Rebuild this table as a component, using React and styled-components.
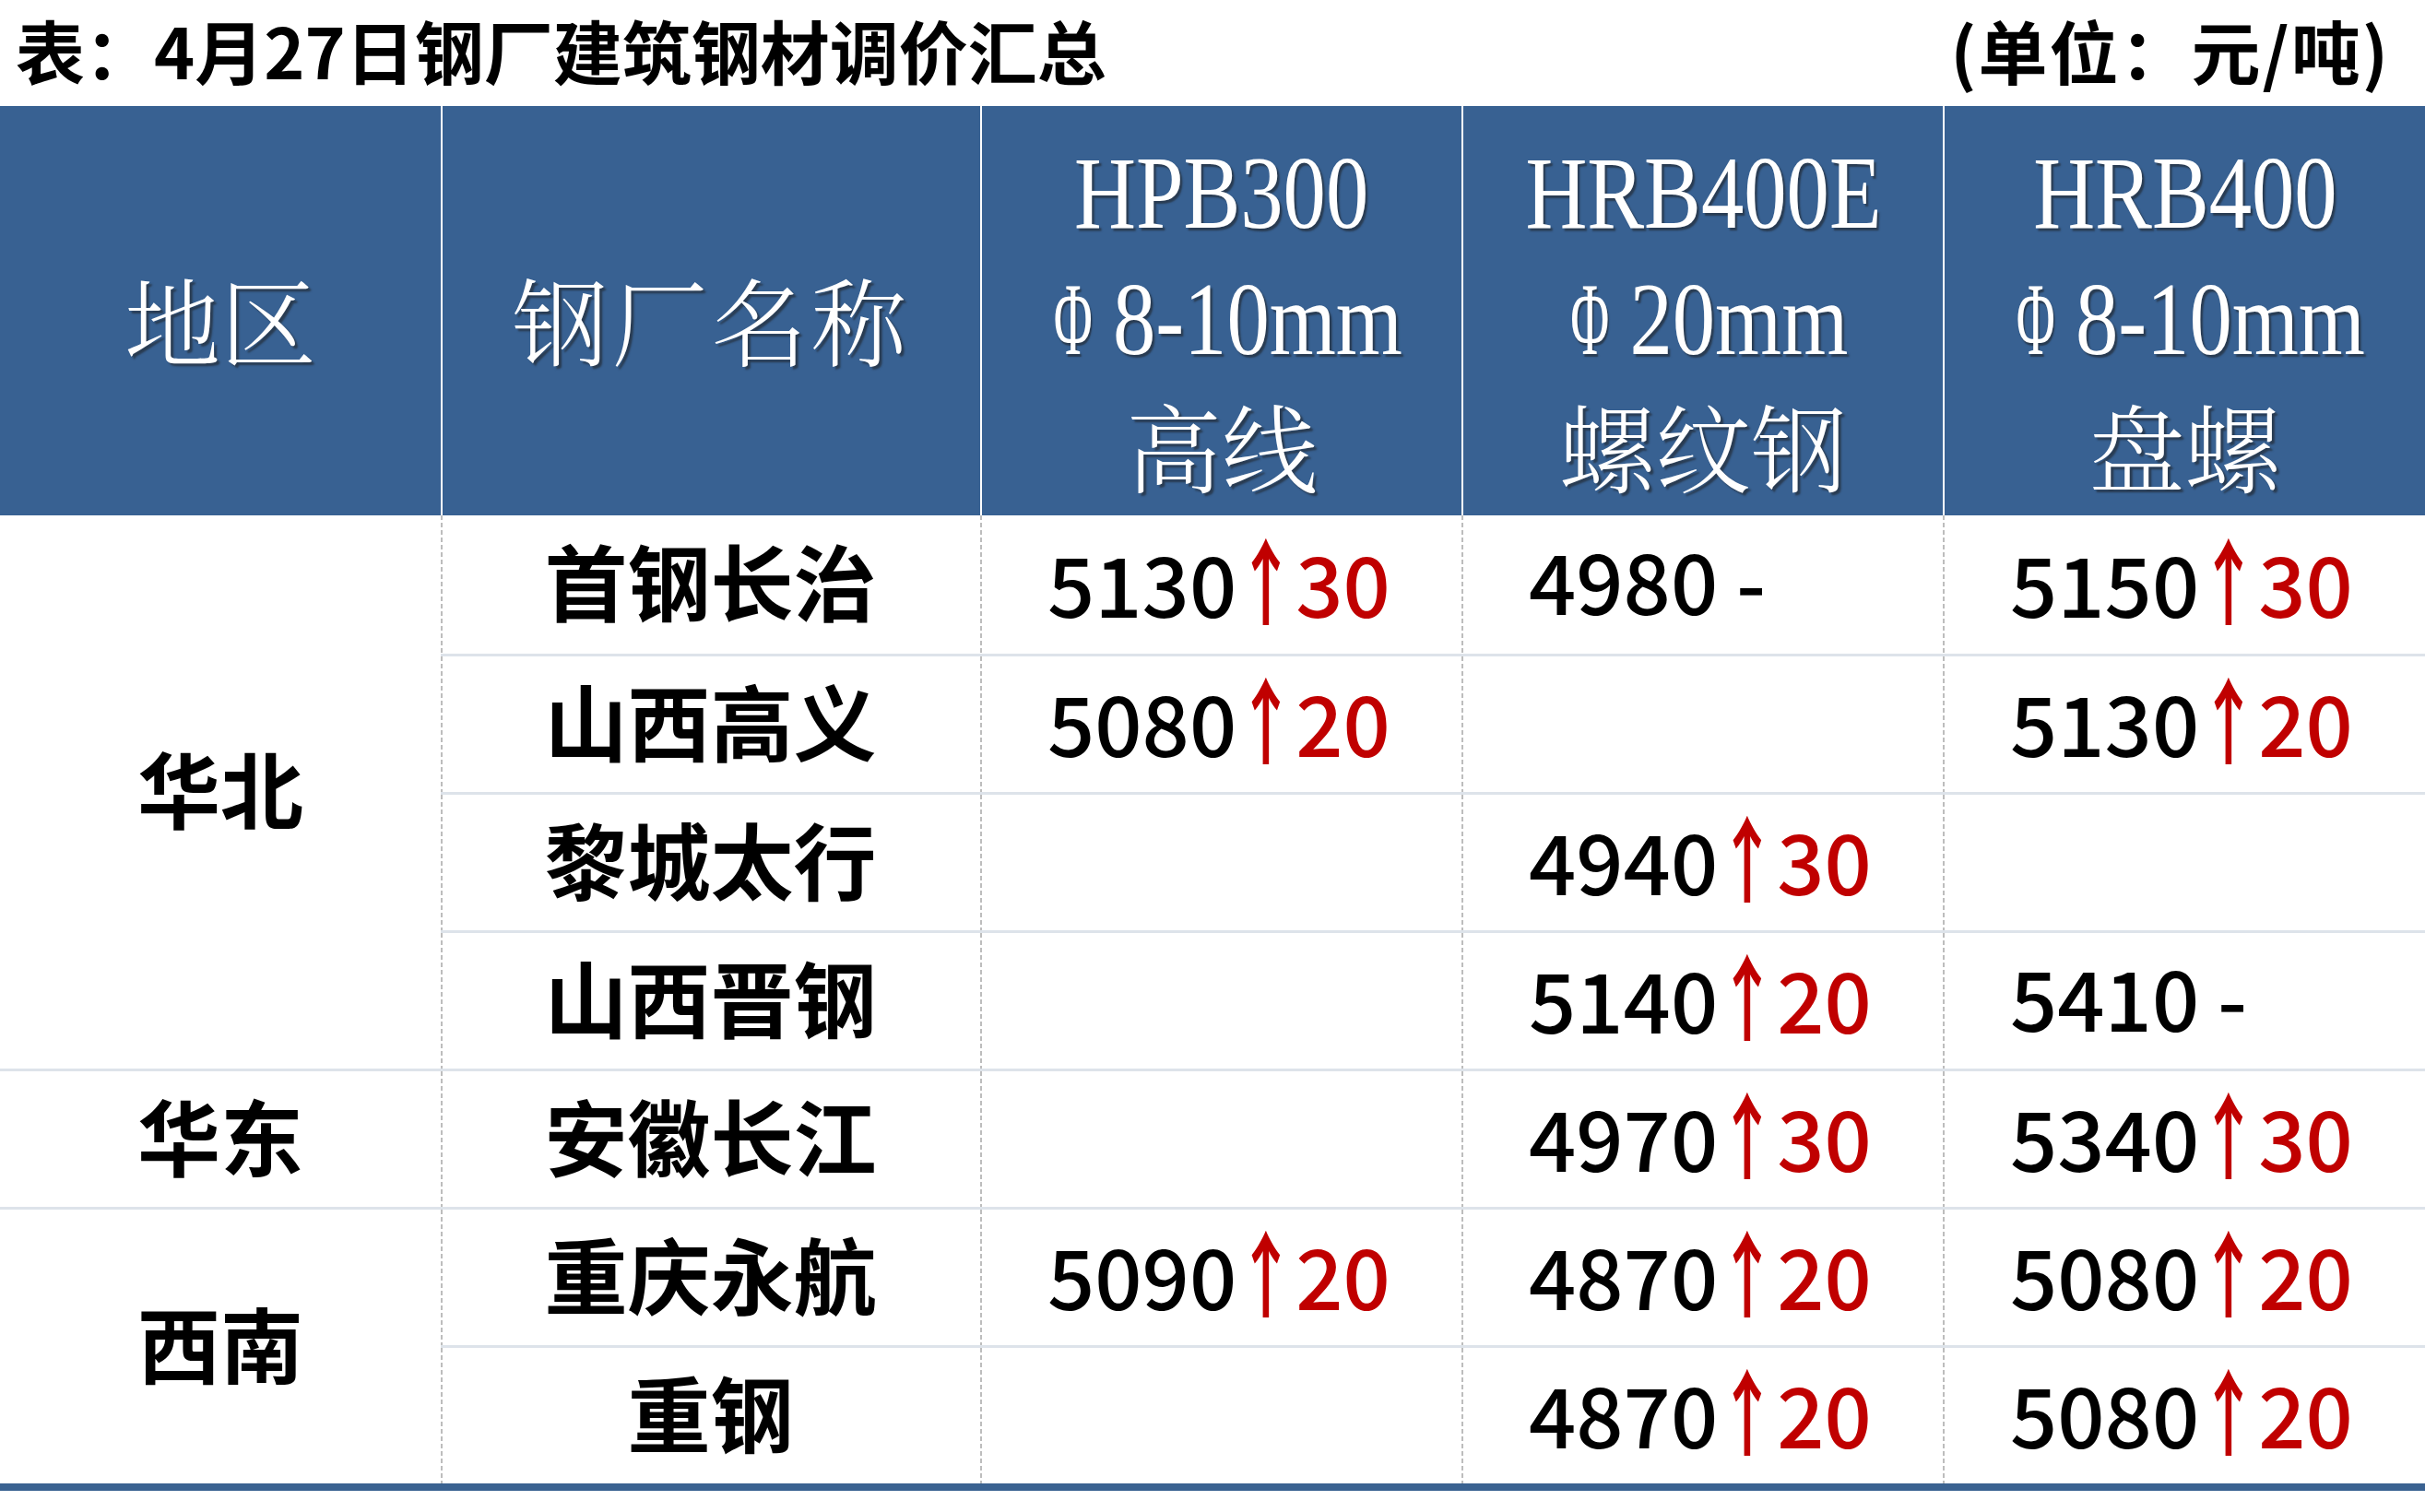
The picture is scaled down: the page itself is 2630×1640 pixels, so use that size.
import React from "react";
import styled, { createGlobalStyle } from "styled-components";

const GlobalStyle = createGlobalStyle`
  html, body { margin: 0; padding: 0; background: #ffffff; }
  body {
    width: 2630px;
    height: 1640px;
    overflow: hidden;
    font-family: "Noto Sans CJK SC", "Noto Sans", sans-serif;
  }
`;

const BLUE = "#386192";
const LINE = "#dde3ea";
const RED = "#c00000";

const Page = styled.div`
  width: 2630px;
  height: 1640px;
  display: flex;
  flex-direction: column;
  background: #fff;
`;

const TitleBar = styled.div`
  height: 115px;
  box-sizing: border-box;
  padding: 0 38px 8px 17px;
  display: flex;
  align-items: center;
  justify-content: space-between;
  font-family: "Noto Sans CJK SC", sans-serif;
  font-weight: 700;
  font-size: 75px;
  line-height: 1;
  color: #000;
  white-space: nowrap;
`;

const Unit = styled.span`
  letter-spacing: 2px;
`;

const Table = styled.div`
  display: grid;
  grid-template-columns: 478px 585px 522px 522px 523px;
  grid-template-rows: 444px repeat(7, 150px);
  border-bottom: 8px solid #3a6291;
`;

const HeadCell = styled.div`
  background: ${BLUE};
  color: #fff;
  display: flex;
  flex-direction: column;
  align-items: center;
  justify-content: center;
  box-sizing: border-box;
  padding-top: 16px;
  border-left: ${(p) => (p.$first ? "none" : "2px solid #ffffff")};
  text-shadow: 3px 3px 2px rgba(30, 30, 30, 0.55);
  white-space: nowrap;
`;

const HeadLine = styled.div`
  font-family: ${(p) =>
    p.$latin
      ? '"Liberation Serif", "Times New Roman", serif'
      : '"Noto Serif CJK SC", "Noto Sans CJK SC", serif'};
  font-size: ${(p) => (p.$latin ? 113 : 104)}px;
  font-weight: ${(p) => (p.$latin ? 400 : 300)};
  line-height: ${(p) => (p.$single ? "1" : "137px")};
  letter-spacing: ${(p) => (p.$spaced ? "4px" : "0")};
`;

const Condensed = styled.span`
  display: inline-block;
  transform: scaleX(0.82);
`;

const Phi = styled.span`
  display: inline-block;
  transform: scaleX(0.62);
  margin-right: 0.1em;
`;

const BodyCell = styled.div`
  display: flex;
  align-items: center;
  box-sizing: border-box;
  padding-bottom: 12px;
  border-top: ${(p) => (p.$top ? `3px solid ${LINE}` : "none")};
  color: #000;
  font-size: 90px;
  line-height: 1;
  white-space: nowrap;
`;

const RegionCell = styled(BodyCell)`
  grid-row: span ${(p) => p.$span};
  justify-content: center;
  font-weight: 700;
`;

const DashedCell = styled(BodyCell)`
  background-image: linear-gradient(to bottom, #bdbdbd 62%, transparent 62%);
  background-size: 2px 8px;
  background-repeat: repeat-y;
  background-position: left top;
`;

const NameCell = styled(DashedCell)`
  justify-content: center;
  font-weight: 700;
`;

const PriceCell = styled(DashedCell)`
  justify-content: flex-start;
  padding-left: 73px;
  font-weight: 500;
`;

const Arrow = styled.span`
  display: inline-block;
  font-family: "Noto Sans CJK SC", sans-serif;
  font-weight: 700;
  font-size: 102px;
  line-height: 90px;
  height: 90px;
  color: ${RED};
  transform: scaleX(0.63);
  margin: 0 -19px;
`;

const Change = styled.span`
  color: ${RED};
`;

const Flat = styled.span`
  margin-left: 0.22em;
`;

const headers = [
  { top: "HPB300", size: "8-10mm", kind: "高线" },
  { top: "HRB400E", size: "20mm", kind: "螺纹钢" },
  { top: "HRB400", size: "8-10mm", kind: "盘螺" },
];

const rows = [
  { region: "华北", span: 4, name: "首钢长治", p: [["5130", "30"], ["4980", null], ["5150", "30"]] },
  { name: "山西高义", p: [["5080", "20"], null, ["5130", "20"]] },
  { name: "黎城太行", p: [null, ["4940", "30"], null] },
  { name: "山西晋钢", p: [null, ["5140", "20"], ["5410", null]] },
  { region: "华东", span: 1, name: "安徽长江", p: [null, ["4970", "30"], ["5340", "30"]] },
  { region: "西南", span: 2, name: "重庆永航", p: [["5090", "20"], ["4870", "20"], ["5080", "20"]] },
  { name: "重钢", p: [null, ["4870", "20"], ["5080", "20"]] },
];

function Price({ value }) {
  if (!value) return null;
  const [price, change] = value;
  return (
    <span>
      {price}
      {change ? (
        <>
          <Arrow>↑</Arrow>
          <Change>{change}</Change>
        </>
      ) : (
        <Flat>-</Flat>
      )}
    </span>
  );
}

export default function App() {
  return (
    <Page>
      <GlobalStyle />
      <TitleBar>
        <span>表：4月27日钢厂建筑钢材调价汇总</span>
        <Unit>(单位：元/吨)</Unit>
      </TitleBar>
      <Table>
        <HeadCell $first>
          <HeadLine $single>地区</HeadLine>
        </HeadCell>
        <HeadCell>
          <HeadLine $single $spaced>钢厂名称</HeadLine>
        </HeadCell>
        {headers.map((h) => (
          <HeadCell key={h.top}>
            <HeadLine $latin>
              <Condensed>{h.top}</Condensed>
            </HeadLine>
            <HeadLine $latin>
              <Condensed>
                <Phi>Φ</Phi>
                {h.size}
              </Condensed>
            </HeadLine>
            <HeadLine>{h.kind}</HeadLine>
          </HeadCell>
        ))}
        {rows.map((r, i) => (
          <React.Fragment key={r.name}>
            {r.region && (
              <RegionCell $span={r.span} $top={i > 0}>
                {r.region}
              </RegionCell>
            )}
            <NameCell $top={i > 0}>{r.name}</NameCell>
            {r.p.map((v, j) => (
              <PriceCell key={j} $top={i > 0}>
                <Price value={v} />
              </PriceCell>
            ))}
          </React.Fragment>
        ))}
      </Table>
    </Page>
  );
}
